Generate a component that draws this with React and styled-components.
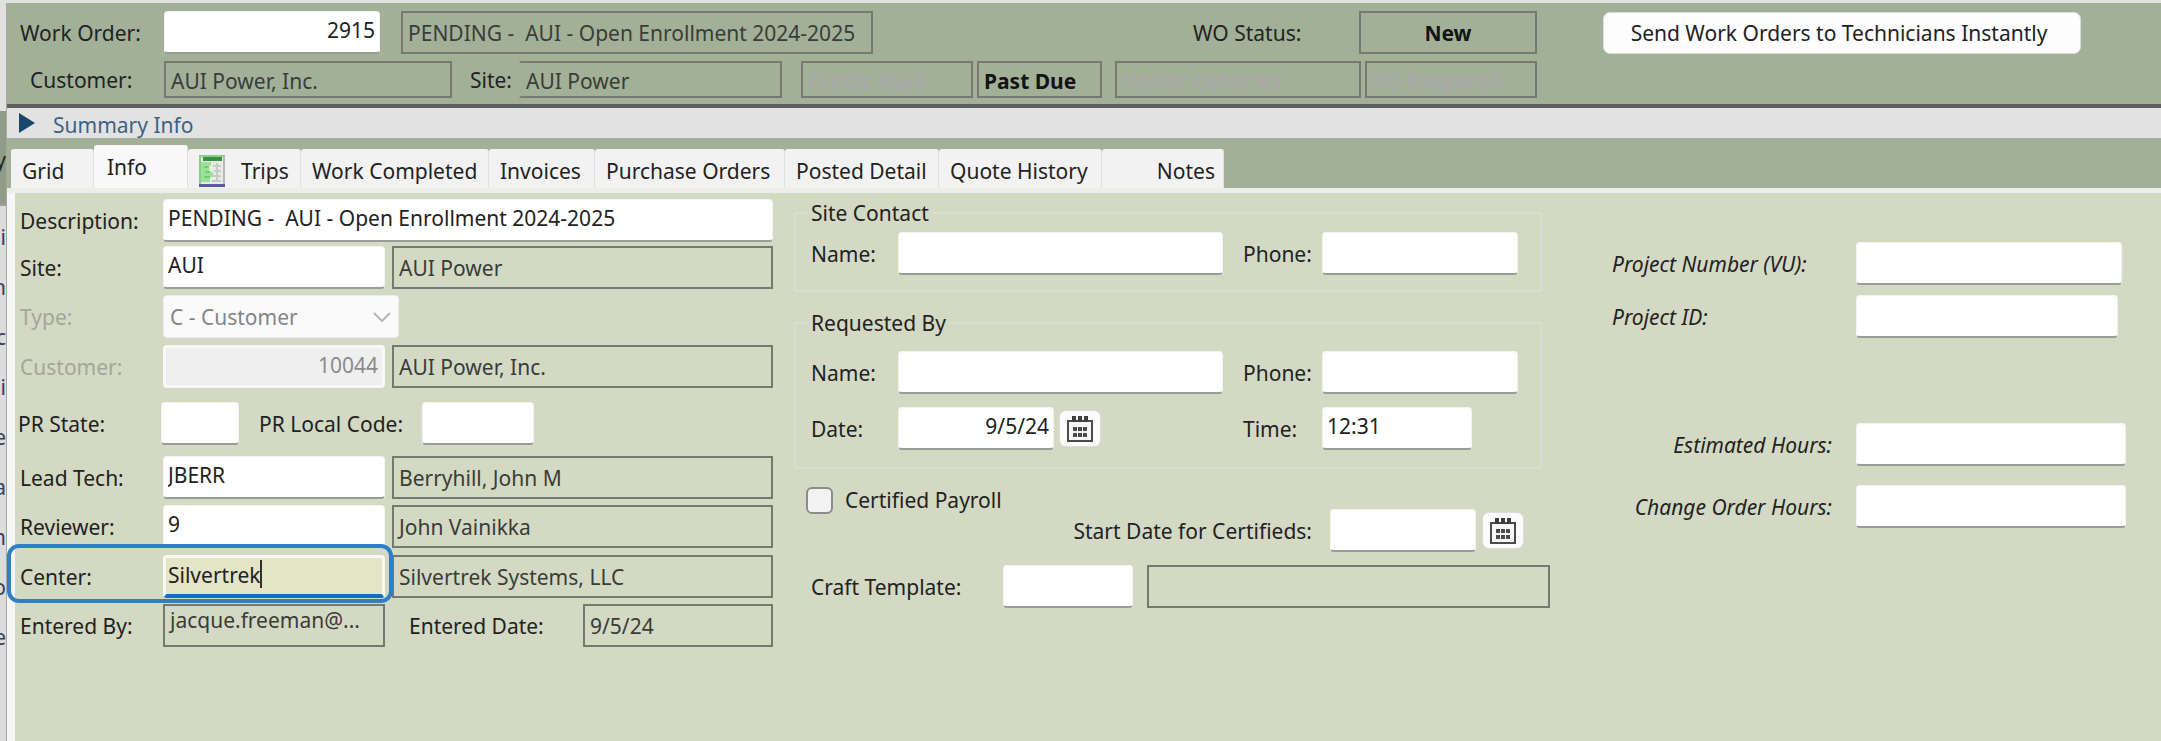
import React, { useState } from "react";
import styled, { createGlobalStyle, css } from "styled-components";

const TABS = [
  { name: "Grid", width: 83 },
  { name: "Info", width: 94 },
  { name: "Trips", width: 113, icon: true },
  { name: "Work Completed", width: 188 },
  { name: "Invoices", width: 106 },
  { name: "Purchase Orders", width: 190 },
  { name: "Posted Detail", width: 154 },
  { name: "Quote History", width: 163 },
  { name: "Notes", width: 122, end: true },
];

const BEHIND = ["i", "h", "c", "i", "e", "a", "m", "o", "e"];

const INITIAL_FORM = {
  workOrder: "2915",
  description: "PENDING -  AUI - Open Enrollment 2024-2025",
  site: "AUI",
  type: "C - Customer",
  customer: "10044",
  prState: "",
  prLocalCode: "",
  leadTech: "JBERR",
  reviewer: "9",
  center: "Silvertrek",
  contactName: "",
  contactPhone: "",
  requestName: "",
  requestPhone: "",
  requestDate: "9/5/24",
  requestTime: "12:31",
  certifiedDate: "",
  craftTemplate: "",
  projectNumber: "",
  projectId: "",
  estimatedHours: "",
  changeOrderHours: "",
};

const SheetIcon = () => (
  <svg width="26" height="32" viewBox="0 0 26 32" aria-hidden="true">
    <rect x="1" y="1" width="24" height="29" fill="#e6ebe5" stroke="#86d086" strokeWidth="2" />
    <path d="M25 1v28" stroke="#b4b9b4" strokeWidth="2" />
    <rect x="4" y="2" width="19" height="4" fill="#3c8f3c" />
    <path d="M2 7h10v4h-2v6h4v5h-3v5H2z" fill="#9be09b" />
    <path d="M14 11h8M15 16h7M14 21h8M13 26h9M18 8v19" stroke="#c6cac6" strokeWidth="2" />
    <path d="M5 12h5M6 17h5M5 22h6" stroke="#74cb74" strokeWidth="2" />
    <rect x="0" y="29" width="26" height="3" fill="#5b58b0" />
  </svg>
);

const CalendarIcon = () => (
  <svg width="28" height="28" viewBox="0 0 28 28" aria-hidden="true">
    <path d="M2 6h24v20H2z" fill="#f7f7f7" stroke="#4b4b4b" strokeWidth="2" />
    <path d="M6 1h4v6H6zM12 1h4v6h-4zM18 1h4v6h-4z" fill="#3d3d3d" />
    <path
      d="M7 12h4v4H7zM12 12h4v4h-4zM17 12h4v4h-4zM7 18h4v4H7zM12 18h4v4h-4zM17 18h4v4h-4z"
      fill="#4a4a4a"
    />
  </svg>
);

const App = () => {
  const [form, setForm] = useState(INITIAL_FORM);
  const [certified, setCertified] = useState(false);
  const [activeTab, setActiveTab] = useState("Info");

  const handleText = (e) => {
    const { name, value } = e.target;
    setForm({ ...form, [name]: value });
  };

  const field = (name) => ({
    id: name,
    name,
    value: form[name],
    onChange: handleText,
    autoComplete: "off",
  });

  return (
    <Screen>
      <GlobalStyle />
      <Behind aria-hidden="true">
        <BehindTop />
        <BehindBar>y</BehindBar>
        <BehindList>
          {BEHIND.map((letter, i) => (
            <span key={i}>{letter}</span>
          ))}
        </BehindList>
      </Behind>
      <Window>
        <Header>
          <HeaderLine>
            <HeaderLabel htmlFor="workOrder">Work Order:</HeaderLabel>
            <Input $width={216} $right {...field("workOrder")} />
            <Output $width={472} $before={21}>
              PENDING -  AUI - Open Enrollment 2024-2025
            </Output>
            <StatusLabel>WO Status:</StatusLabel>
            <Output $width={178} $bold $center>
              New
            </Output>
            <SendButton type="button">
              Send Work Orders to Technicians Instantly
            </SendButton>
          </HeaderLine>
          <HeaderLine>
            <HeaderLabel as="span" $indent>
              Customer:
            </HeaderLabel>
            <Output $width={288} $short>
              AUI Power, Inc.
            </Output>
            <SiteLabel>Site:</SiteLabel>
            <Output $width={263} $short $open>
              AUI Power
            </Output>
            <Output $width={172} $before={19} $short $bold $faded>
              Credit Hold
            </Output>
            <Output $width={125} $before={4} $short $bold>
              Past Due
            </Output>
            <Output $width={246} $before={13} $short $bold $faded>
              Under Contract
            </Output>
            <Output $width={172} $before={4} $short $bold $faded>
              PO Required
            </Output>
          </HeaderLine>
        </Header>
        <Summary type="button">
          <svg width="18" height="20" viewBox="0 0 18 20" aria-hidden="true">
            <path d="M1 0l16 10L1 20z" fill="#17486b" />
          </svg>
          Summary Info
        </Summary>
        <Tabs role="tablist">
          {TABS.map((tab) => (
            <Tab
              key={tab.name}
              type="button"
              role="tab"
              aria-selected={activeTab === tab.name}
              $active={activeTab === tab.name}
              $width={tab.width}
              $end={tab.end}
              onClick={() => setActiveTab(tab.name)}
            >
              {tab.icon && <SheetIcon />}
              {tab.name}
            </Tab>
          ))}
        </Tabs>
        <Panel>
          <Details>
            <Row>
              <Label htmlFor="description">Description:</Label>
              <Input $grow {...field("description")} />
            </Row>
            <Row $space={4}>
              <Label htmlFor="site">Site:</Label>
              <Input $width={222} {...field("site")} />
              <Output $grow $before={7}>
                AUI Power
              </Output>
            </Row>
            <Row $space={6}>
              <Label htmlFor="type" $disabled>
                Type:
              </Label>
              <SelectBox>
                <Select {...field("type")} disabled>
                  <option>C - Customer</option>
                </Select>
                <svg width="18" height="10" viewBox="0 0 18 10" aria-hidden="true">
                  <path d="M1 1l8 8 8-8" fill="none" stroke="#b5b5b5" strokeWidth="2" />
                </svg>
              </SelectBox>
            </Row>
            <Row $space={7}>
              <Label htmlFor="customer" $disabled>
                Customer:
              </Label>
              <Input $width={222} $right disabled {...field("customer")} />
              <Output $grow $before={7}>
                AUI Power, Inc.
              </Output>
            </Row>
            <Row $space={14}>
              <Label htmlFor="prState" $wide>
                PR State:
              </Label>
              <Input $width={78} {...field("prState")} />
              <CodeLabel htmlFor="prLocalCode">PR Local Code:</CodeLabel>
              <Input $width={112} {...field("prLocalCode")} />
            </Row>
            <Row $space={11}>
              <Label htmlFor="leadTech">Lead Tech:</Label>
              <Input $width={222} {...field("leadTech")} />
              <Output $grow $before={7}>
                Berryhill, John M
              </Output>
            </Row>
            <Row $space={6}>
              <Label htmlFor="reviewer">Reviewer:</Label>
              <Input $width={222} {...field("reviewer")} />
              <Output $grow $before={7}>
                John Vainikka
              </Output>
            </Row>
            <Row $space={7}>
              <Label htmlFor="center">Center:</Label>
              <FocusedField>
                <Input $width={222} $focused {...field("center")} />
                <Caret>{form.center}</Caret>
              </FocusedField>
              <Output $grow $before={7}>
                Silvertrek Systems, LLC
              </Output>
              <Highlight />
            </Row>
            <Row $space={6}>
              <Label as="span">Entered By:</Label>
              <Output $width={222} $top>
                jacque.freeman@...
              </Output>
              <EnteredLabel>Entered Date:</EnteredLabel>
              <Output $grow>9/5/24</Output>
            </Row>
          </Details>

          <Requests>
            <Group>
              <legend>Site Contact</legend>
              <Row>
                <ShortLabel htmlFor="contactName">Name:</ShortLabel>
                <Input $width={325} {...field("contactName")} />
                <PhoneLabel htmlFor="contactPhone">Phone:</PhoneLabel>
                <Input $width={196} {...field("contactPhone")} />
              </Row>
            </Group>
            <Group $tall>
              <legend>Requested By</legend>
              <Row>
                <ShortLabel htmlFor="requestName">Name:</ShortLabel>
                <Input $width={325} {...field("requestName")} />
                <PhoneLabel htmlFor="requestPhone">Phone:</PhoneLabel>
                <Input $width={196} {...field("requestPhone")} />
              </Row>
              <Row $space={13}>
                <ShortLabel htmlFor="requestDate">Date:</ShortLabel>
                <DateField>
                  <Input $width={156} $right {...field("requestDate")} />
                  <IconButton type="button" aria-label="Pick date">
                    <CalendarIcon />
                  </IconButton>
                </DateField>
                <PhoneLabel htmlFor="requestTime">Time:</PhoneLabel>
                <Input $width={150} {...field("requestTime")} />
              </Row>
            </Group>
            <CheckLabel>
              <Checkbox
                type="checkbox"
                checked={certified}
                onChange={(e) => setCertified(e.target.checked)}
              />
              Certified Payroll
            </CheckLabel>
            <CertifiedRow>
              <label htmlFor="certifiedDate">Start Date for Certifieds:</label>
              <Input $width={146} {...field("certifiedDate")} />
              <IconButton type="button" aria-label="Pick start date">
                <CalendarIcon />
              </IconButton>
            </CertifiedRow>
            <Row $space={13}>
              <CraftLabel htmlFor="craftTemplate">Craft Template:</CraftLabel>
              <Input $width={130} {...field("craftTemplate")} />
              <Output $grow $before={14} />
            </Row>
          </Requests>

          <Project>
            <Row $end={4}>
              <ProjectLabel htmlFor="projectNumber">Project Number (VU):</ProjectLabel>
              <Input $grow {...field("projectNumber")} />
            </Row>
            <Row $space={10} $end={8}>
              <ProjectLabel htmlFor="projectId">Project ID:</ProjectLabel>
              <Input $grow {...field("projectId")} />
            </Row>
            <Row $space={85}>
              <ProjectLabel htmlFor="estimatedHours" $right>
                Estimated Hours:
              </ProjectLabel>
              <Input $grow {...field("estimatedHours")} />
            </Row>
            <Row $space={19}>
              <ProjectLabel htmlFor="changeOrderHours" $right>
                Change Order Hours:
              </ProjectLabel>
              <Input $grow {...field("changeOrderHours")} />
            </Row>
          </Project>
        </Panel>
      </Window>
    </Screen>
  );
};

const GlobalStyle = createGlobalStyle`
  * {
    box-sizing: border-box;
  }

  body {
    margin: 0;
    background-color: #e1e1e1;
    color: #222222;
    font: 21px/30px "Noto Sans", "DejaVu Sans", sans-serif;
  }

  input,
  button,
  select {
    font: inherit;
    color: inherit;
  }
`;

const Screen = styled.div`
  display: flex;
  min-height: 100vh;
  padding-top: 3px;
`;

const Behind = styled.div`
  display: flex;
  flex-direction: column;
  width: 7px;
  flex-shrink: 0;
  overflow: hidden;
  border-right: 1px solid #a5a8a2;
`;

const BehindTop = styled.div`
  height: 108px;
  background-color: #e1e1e1;
`;

const BehindBar = styled.div`
  display: flex;
  justify-content: flex-end;
  height: 93px;
  padding-top: 34px;
  background-color: #8f9c87;
`;

const BehindList = styled.div`
  display: flex;
  flex-direction: column;
  align-items: flex-end;
  flex: 1;
  padding-top: 6px;
  border-top: 2px solid #a0a0a0;
  background-color: #dcdcdc;
  color: #33425c;
  line-height: 50px;
`;

const Window = styled.main`
  display: flex;
  flex-direction: column;
  flex: 1;
  min-width: 0;
  background-color: #a3b098;
`;

const Header = styled.header`
  display: flex;
  flex-direction: column;
  gap: 7px;
  padding: 8px 0 6px;
  border-bottom: 4px solid #5d605f;
`;

const HeaderLine = styled.div`
  display: flex;
  align-items: center;
`;

const HeaderLabel = styled.label`
  width: 157px;
  flex-shrink: 0;
  padding-left: ${({ $indent }) => ($indent ? 23 : 13)}px;
`;

const StatusLabel = styled.span`
  flex: 0 1 486px;
  padding-left: 320px;
  white-space: nowrap;
`;

const SiteLabel = styled.span`
  width: 67px;
  padding-left: 18px;
`;

const grow = css`
  flex: 1;
  width: 0;
`;

const Input = styled.input`
  width: ${({ $width }) => $width}px;
  min-width: 0;
  height: 43px;
  padding: 0 4px 4px;
  border: 1px solid #f4f4f1;
  border-bottom: 2px solid #9a9c98;
  border-radius: 4px;
  background-color: #ffffff;
  outline: none;
  text-align: ${({ $right }) => ($right ? "right" : "left")};
  ${({ $grow }) => $grow && grow}
  ${({ $focused }) =>
    $focused &&
    css`
      border: 3px solid #f8f8f4;
      border-bottom: 4px solid #1270c4;
      padding: 0 2px 2px;
      background-color: #e4e4c6;
    `}

  &:disabled {
    border: 3px solid #f8f8f8;
    background-color: #efefef;
    color: #8b8b8b;
  }
`;

const Output = styled.output`
  width: ${({ $width }) => $width}px;
  min-width: 0;
  height: ${({ $short }) => ($short ? 37 : 43)}px;
  margin-left: ${({ $before }) => $before || 0}px;
  padding: 3px 5px;
  border: 2px solid #75796f;
  overflow: hidden;
  line-height: ${({ $short, $top }) => ($short ? 32 : $top ? 22 : 34)}px;
  white-space: pre;
  color: ${({ $bold }) => ($bold ? "#141414" : "#3a3c38")};
  ${({ $short }) => $short && "padding-top: 2px;"}
  ${({ $bold }) => $bold && "font-weight: 700;"}
  ${({ $center }) => $center && "text-align: center;"}
  ${({ $faded }) => $faded && "color: #a9a9a8;"}
  ${({ $open }) => $open && "border-left-color: transparent;"}
  ${({ $grow }) => $grow && grow}
`;

const SendButton = styled.button`
  margin-left: 66px;
  width: 478px;
  height: 42px;
  padding: 0 6px 0 0;
  border: 1px solid #d9dcd5;
  border-radius: 7px;
  background-color: #fdfdfd;
  white-space: nowrap;
`;

const Summary = styled.button`
  display: flex;
  align-items: center;
  gap: 17px;
  height: 30px;
  padding: 3px 11px 0;
  border: none;
  background-color: #e2e2e2;
  color: #3d6285;

  svg {
    margin-bottom: 4px;
  }
`;

const Tabs = styled.div`
  display: flex;
  align-items: flex-end;
  height: 55px;
  padding: 0 4px;
  border-bottom: 5px solid #eceee9;
`;

const Tab = styled.button`
  display: flex;
  align-items: center;
  justify-content: ${({ $end }) => ($end ? "flex-end" : "flex-start")};
  gap: 16px;
  flex: 0 1 ${({ $width }) => $width}px;
  height: ${({ $active }) => ($active ? 43 : 39)}px;
  padding: ${({ $active }) => ($active ? "0 13px 0" : "4px 8px 0 11px")};
  border: none;
  border-right: 1px solid #dfe1dc;
  border-radius: 3px 3px 0 0;
  background-color: ${({ $active }) => ($active ? "#f9f9f9" : "#f2f2f2")};
  white-space: nowrap;
`;

const Panel = styled.div`
  display: grid;
  grid-template-columns: 758fr 756fr 555fr;
  column-gap: 21px;
  flex: 1;
  padding-right: 35px;
  border-left: 8px solid #f6f6f4;
  background-color: #d4d9c4;
`;

const Details = styled.section`
  min-width: 0;
  padding: 6px 0 60px;
`;

const Row = styled.div`
  position: relative;
  display: flex;
  align-items: center;
  margin-top: ${({ $space }) => $space || 0}px;
  padding-right: ${({ $end }) => $end || 0}px;
`;

const Label = styled.label`
  width: ${({ $wide }) => ($wide ? 146 : 148)}px;
  flex-shrink: 0;
  padding-left: ${({ $wide }) => ($wide ? 3 : 5)}px;
  color: ${({ $disabled }) => ($disabled ? "#a3a69d" : "inherit")};
`;

const CodeLabel = styled.label`
  width: 183px;
  padding-left: 20px;
`;

const EnteredLabel = styled.span`
  width: 198px;
  padding-left: 24px;
`;

const SelectBox = styled.div`
  display: grid;
  align-items: center;
  width: 236px;

  > * {
    grid-area: 1 / 1;
  }

  svg {
    justify-self: end;
    margin-right: 8px;
  }
`;

const Select = styled.select`
  width: 100%;
  height: 43px;
  padding: 0 6px;
  border: 1px solid #ececea;
  border-radius: 4px;
  appearance: none;
  background-color: #fafafa;
  opacity: 1;

  &:disabled {
    color: #858585;
  }
`;

const FocusedField = styled.div`
  position: relative;
  display: flex;
`;

const Caret = styled.span`
  position: absolute;
  left: 5px;
  top: 5px;
  height: 28px;
  border-right: 2px solid #30302c;
  color: transparent;
  pointer-events: none;
`;

const Highlight = styled.div`
  position: absolute;
  top: -11px;
  left: -8px;
  width: 386px;
  height: 59px;
  border: 4px solid #2b80c8;
  border-radius: 12px;
  pointer-events: none;
`;

const Requests = styled.section`
  min-width: 0;
  padding-top: 5px;
`;

const Group = styled.fieldset`
  width: 748px;
  max-width: 100%;
  min-width: 0;
  height: ${({ $tall }) => ($tall ? 161 : 94)}px;
  margin: 0;
  margin-top: ${({ $tall }) => ($tall ? 16 : 0)}px;
  padding: ${({ $tall }) => ($tall ? "13px" : "4px")} 0 0;
  border: 2px solid #dadcd6;
  border-radius: 3px;

  legend {
    margin-left: 11px;
    padding: 0 4px;
  }
`;

const ShortLabel = styled.label`
  width: 102px;
  padding-left: 15px;
`;

const PhoneLabel = styled.label`
  width: 99px;
  padding-left: 20px;
`;

const DateField = styled.div`
  display: flex;
  align-items: center;
  gap: 5px;
  width: 325px;
`;

const IconButton = styled.button`
  display: flex;
  align-items: center;
  justify-content: center;
  width: 42px;
  height: 37px;
  padding: 0;
  border: 1px solid #dcdcdc;
  border-radius: 7px;
  background-color: #fbfbfb;
`;

const CheckLabel = styled.label`
  display: flex;
  align-items: center;
  gap: 12px;
  margin: 16px 0 0 12px;
`;

const Checkbox = styled.input`
  width: 27px;
  height: 27px;
  margin: 0;
  border: 2px solid #8b8c8a;
  border-radius: 6px;
  appearance: none;
  background-color: #f3f3f3;

  &:checked {
    background-color: #1270c4;
  }
`;

const CertifiedRow = styled.div`
  display: flex;
  align-items: center;
  justify-content: flex-end;
  gap: 6px;
  padding-right: 26px;
  margin-top: -6px;

  label {
    margin-right: 12px;
  }
`;

const CraftLabel = styled.label`
  width: 209px;
  padding-left: 17px;
`;

const Project = styled.section`
  min-width: 0;
  padding: 49px 0 0 41px;
`;

const ProjectLabel = styled.label`
  width: 244px;
  padding-right: ${({ $right }) => ($right ? 24 : 0)}px;
  text-align: ${({ $right }) => ($right ? "right" : "left")};
  font-style: italic;
`;

export default App;
